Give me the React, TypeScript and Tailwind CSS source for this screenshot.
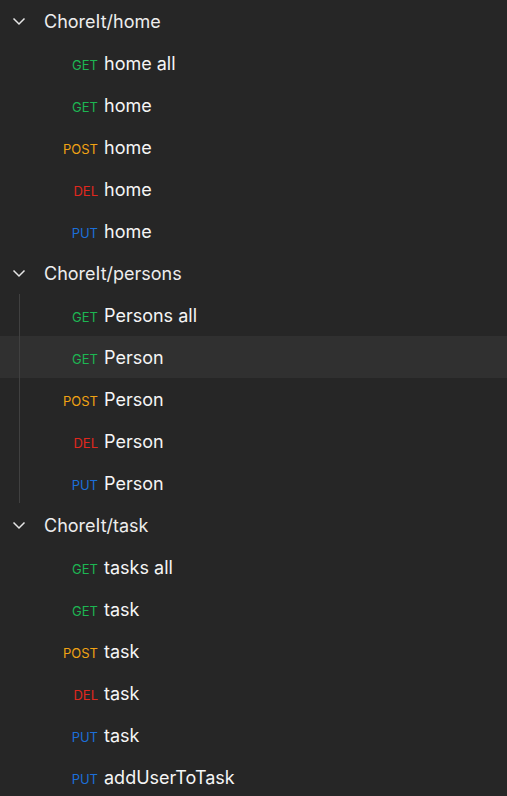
import React from "react";

type Method = "GET" | "POST" | "DEL" | "PUT";
const methodColor: Record<Method, string> = {
  GET: "text-[#1db552]",
  POST: "text-[#f0a314]",
  DEL: "text-[#e0281e]",
  PUT: "text-[#1c6fd8]",
};

const groups: { name: string; line?: boolean; items: [Method, string][] }[] = [
  {
    name: "ChoreIt/home",
    items: [
      ["GET", "home all"],
      ["GET", "home"],
      ["POST", "home"],
      ["DEL", "home"],
      ["PUT", "home"],
    ],
  },
  {
    name: "ChoreIt/persons",
    line: true,
    items: [
      ["GET", "Persons all"],
      ["GET", "Person"],
      ["POST", "Person"],
      ["DEL", "Person"],
      ["PUT", "Person"],
    ],
  },
  {
    name: "ChoreIt/task",
    items: [
      ["GET", "tasks all"],
      ["GET", "task"],
      ["POST", "task"],
      ["DEL", "task"],
      ["PUT", "task"],
      ["PUT", "addUserToTask"],
    ],
  },
];

function Chevron() {
  return (
    <svg width="14" height="14" viewBox="0 0 14 14" className="shrink-0">
      <path d="M1.5 4.5 L7 10 L12.5 4.5" fill="none" stroke="#e6e6e6" strokeWidth="1.5" />
    </svg>
  );
}

export default function App() {
  return (
    <div
      className="w-[507px] h-[796px] overflow-hidden bg-[#262626]"
      style={{ fontFamily: "Inter, 'Noto Sans', sans-serif" }}
    >
      {groups.map((g) => (
        <div key={g.name}>
          <div className="h-[42px] flex items-center pl-[12px]">
            <Chevron />
            <span className="ml-[18px] text-[18px] text-[#ededed]">{g.name}</span>
          </div>
          <div className="relative">
            {g.line && (
              <div className="absolute left-[19px] top-0 bottom-[1px] w-px bg-[#404040] z-10" />
            )}
            {g.items.map(([m, n], i) => {
              const hl = g.line && i === 1;
              return (
                <div
                  key={i}
                  className={`h-[42px] flex items-center ${hl ? "bg-[#303030]" : ""}`}
                >
                  <div className="flex items-baseline">
                    <span className={`w-[98px] text-right text-[13px] ${methodColor[m]}`}>{m}</span>
                    <span className="ml-[6px] text-[18px] text-[#f5f5f5]">{n}</span>
                  </div>
                </div>
              );
            })}
          </div>
        </div>
      ))}
    </div>
  );
}
